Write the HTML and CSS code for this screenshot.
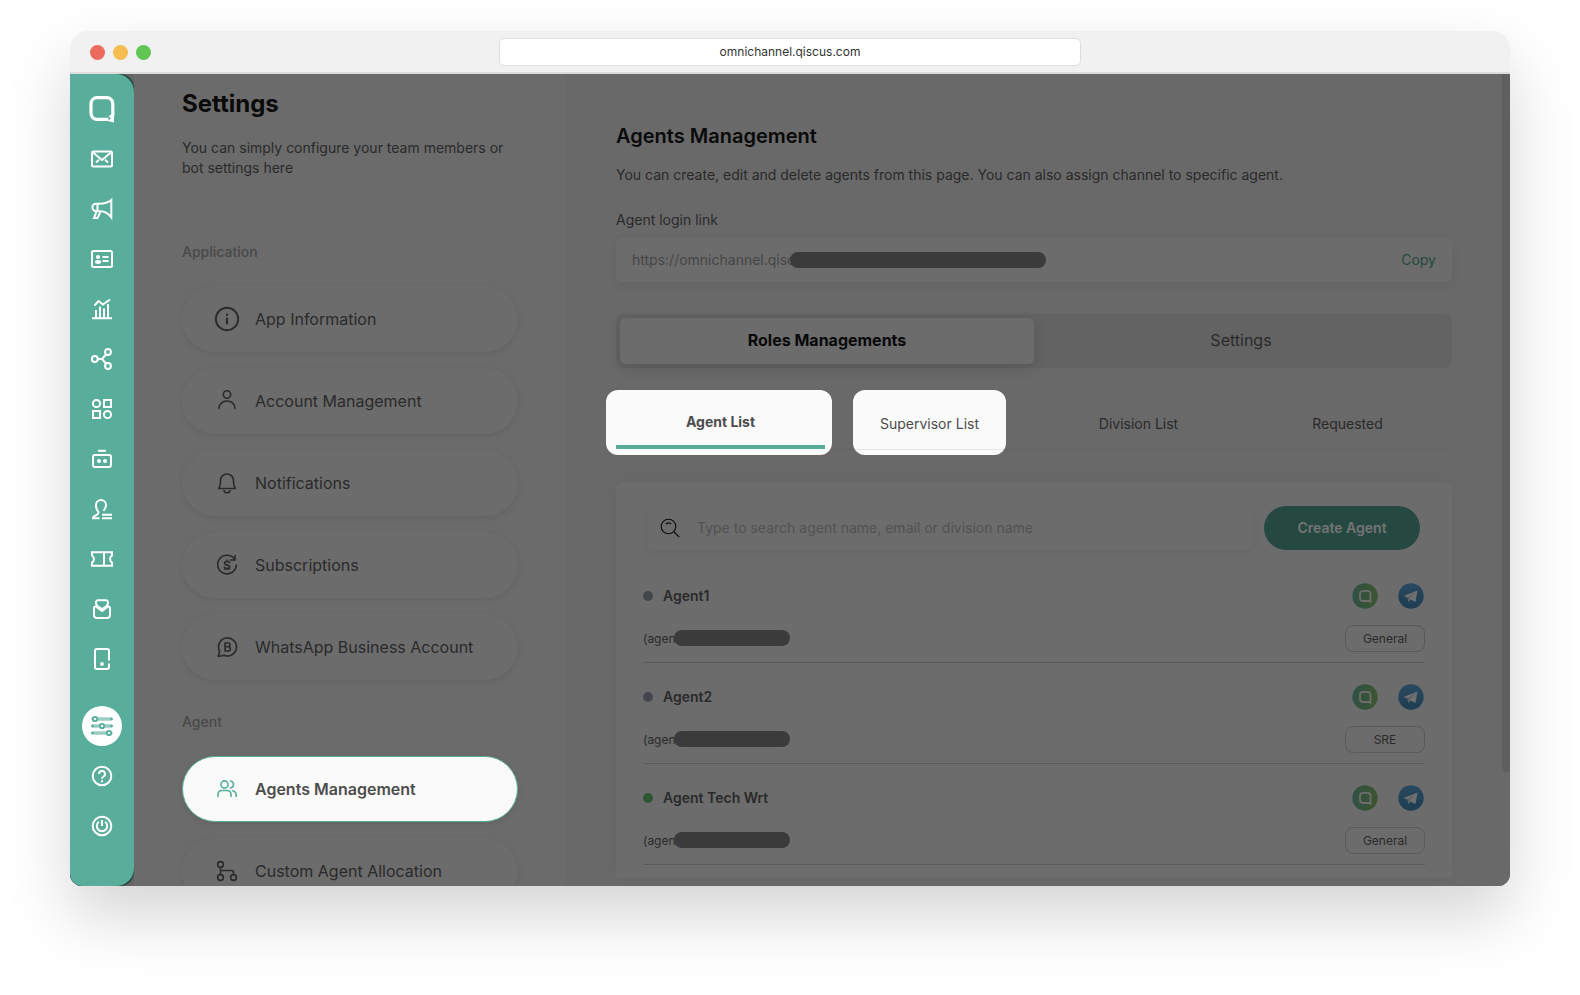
FILE: index.html
```html
<!DOCTYPE html>
<html lang="en">
<head>
<meta charset="utf-8">
<title>Agents Management</title>
<link rel="stylesheet" href="styles.css">
</head>
<body>
<svg class="defs" aria-hidden="true">
  <defs>
    <linearGradient id="g-qiscus" x1="0" y1="0" x2="1" y2="0"><stop offset="0" stop-color="#2f5145"/><stop offset="1" stop-color="#3c552f"/></linearGradient>
    <linearGradient id="g-telegram" x1="0" y1="0" x2="0" y2="1"><stop offset="0" stop-color="#28495f"/><stop offset="1" stop-color="#1e3d52"/></linearGradient>
    <symbol id="i-qiscus" viewBox="0 0 26 26"><circle cx="13" cy="13" r="12.700" fill="url(#g-qiscus)"/><path d="M18.500 18.800l-1.500-.8H11a3 3 0 0 1-3-3V10.800a3 3 0 0 1 3-3h4.500a3 3 0 0 1 3 3v8z" fill="none" stroke="#6d6d6d" stroke-width="1.800"/></symbol>
    <symbol id="i-telegram" viewBox="0 0 26 26"><circle cx="13" cy="13" r="12.700" fill="url(#g-telegram)"/><path d="M5.500 13 19.500 7.500 17.500 19 12.500 16.500 10.500 19 9.500 14.500z" fill="#707070"/><path d="M9.500 14.500 17 9.500 11.500 15.500 10.500 19z" fill="#585f64"/></symbol>
  </defs>
</svg>

<div class="browser">
  <header class="titlebar">
    <div class="lights"><span class="light light-red"></span><span class="light light-yellow"></span><span class="light light-green"></span></div>
    <input class="address" type="text" value="omnichannel.qiscus.com" aria-label="Address" readonly>
  </header>

  <div class="app">
    <div class="rail-wrap">
    <nav class="rail" aria-label="Main">
      <a class="rail-item" href="#" aria-label="Home"><svg width="28" height="28" viewBox="0 0 28 28"><path d="M20.500 24.300H9a6 6 0 0 1-6-6V8.700a6 6 0 0 1 6-6h9.800a6 6 0 0 1 6 6V20" fill="none" stroke="#fff" stroke-width="3.200"/><path d="M20.500 21l5.900-3-.6 9.600-6-1.700 3.200-2.400z" fill="#fff"/></svg></a>
      <a class="rail-item" href="#" aria-label="Inbox"><svg class="ico" viewBox="0 0 24 24"><rect x="2" y="4.500" width="20" height="15" rx="1.500"/><path d="M3 5.500l9 7.500 9-7.500M6 15.500l3-2.700M18 15.500l-3-2.700"/></svg></a>
      <a class="rail-item" href="#" aria-label="Broadcast"><svg class="ico" viewBox="0 0 24 24"><path d="M21.300 3v17.500C18 16 15 14 8 14H6a3.600 3.600 0 0 1 0-7.300h3C15 6.700 18 6 21.300 3zM7.500 7v7M6.500 14.500L4 21h3.500L10.500 14.500"/></svg></a>
      <a class="rail-item" href="#" aria-label="Contacts"><svg class="ico" viewBox="0 0 24 24"><rect x="2" y="4" width="20" height="16" rx="1.500"/><circle cx="8" cy="10" r="2.100" class="fill"/><ellipse cx="8" cy="15" rx="3" ry="1.900" class="fill"/><path d="M12.500 10h6M12.500 14h6"/></svg></a>
      <a class="rail-item" href="#" aria-label="Analytics"><svg class="ico" viewBox="0 0 24 24"><path d="M2 21.300h20M6 21v-8M10 21V9.500M14 21v-9.500M18 21V7M4.500 8.500L8.500 4l4.500 3.500 7-5"/></svg></a>
      <a class="rail-item" href="#" aria-label="Integration"><svg class="ico" viewBox="0 0 24 24"><circle cx="4.800" cy="12" r="2.900"/><circle cx="18" cy="5" r="2.900"/><circle cx="18" cy="19" r="2.900"/><path d="M8 12h4M16 7.500L12 12l4 4.500"/></svg></a>
      <a class="rail-item" href="#" aria-label="App center"><svg class="ico" viewBox="0 0 24 24"><circle cx="6.500" cy="6.500" r="3.600"/><rect x="14" y="3" width="7" height="7"/><rect x="3" y="14" width="7" height="7"/><circle cx="17.500" cy="17.500" r="3.600"/></svg></a>
      <a class="rail-item" href="#" aria-label="Bot"><svg class="ico" viewBox="0 0 24 24"><path d="M8 3.800h8"/><rect x="3" y="8" width="18" height="12" rx="2"/><circle cx="9" cy="14" r="2" class="fill"/><circle cx="15" cy="14" r="2" class="fill"/></svg></a>
      <a class="rail-item" href="#" aria-label="Customers"><svg class="ico" viewBox="0 0 24 24"><path d="M2 21.300h7.500M3 20c2.500-2 5.500-2 5.500-4.500C8.500 14 6 13 6 9V8a5 5 0 0 1 10 0c0 3-2 4-2 6M12 21.300h10M12 17.700h10"/></svg></a>
      <a class="rail-item" href="#" aria-label="Tickets"><svg class="ico" viewBox="0 0 24 24"><path d="M2 5.200h20v3.300c-2.600 1.500-2.600 5.500 0 7v3.300H2v-3.300c2.600-1.500 2.600-5.500 0-7zM14 5v14"/></svg></a>
      <a class="rail-item" href="#" aria-label="Messages"><svg class="ico" viewBox="0 0 24 24"><path d="M8 9.500L6.200 7.200c-.6-1.200-.4-4 1.800-4h8c2.200 0 2.400 2.800 1.800 4L16 9.500 12 12zM4 11.500V18a3 3 0 0 0 3 3h10a3 3 0 0 0 3-3v-6.500c0-2-1.500-2.300-2.500-1.500L12 14 6.500 10C5.500 9.200 4 9.500 4 11.500z"/></svg></a>
      <a class="rail-item" href="#" aria-label="Mobile"><svg class="ico" viewBox="0 0 24 24"><path d="M19 13.500V4a2 2 0 0 0-2-2H7a2 2 0 0 0-2 2v16a2 2 0 0 0 2 2h10a2 2 0 0 0 2-2v-3.500"/><circle cx="12" cy="17" r="1.900" class="fill"/></svg></a>
      <a class="rail-item rail-current" href="#" aria-label="Settings"><span class="disc"><svg width="24" height="24" viewBox="0 0 24 24"><path d="M3 5h18M3 12h18M3 19h18" stroke="#9acdc1" stroke-width="3.600" stroke-linecap="round"/><g fill="#e4f3f0" stroke="#58ae9b" stroke-width="1.800"><circle cx="5" cy="5" r="2.200"/><circle cx="12" cy="12" r="2.200"/><circle cx="19" cy="19" r="2.200"/></g><g fill="#58ae9b"><circle cx="21.500" cy="5" r="1.300"/><circle cx="2.500" cy="12" r="1.300"/><circle cx="21.500" cy="12" r="1.300"/><circle cx="2.500" cy="19" r="1.300"/></g></svg></span></a>
      <a class="rail-item" href="#" aria-label="Help"><svg class="ico" viewBox="0 0 24 24"><circle cx="12" cy="12" r="9.300"/><path d="M9 10a3 3 0 1 1 4.500 2.500c-1 .6-1.500 1-1.500 2.300M12 16.300v2"/></svg></a>
      <a class="rail-item" href="#" aria-label="Log out"><svg class="ico" viewBox="0 0 24 24"><circle cx="12" cy="12" r="9.300"/><path d="M9 7.800a5.200 5.200 0 1 0 6 0M12 6v6"/></svg></a>
    </nav>
    </div>

    <aside class="menu">
      <h1 class="menu-title">Settings</h1>
      <p class="menu-text">You can simply configure your team members or bot settings here</p>
      <h2 class="menu-label">Application</h2>
      <nav class="menu-group" aria-label="Application">
        <a class="menu-card" href="#"><svg class="mi" viewBox="0 0 26 26"><circle cx="13" cy="13" r="11.200" stroke-width="1.900"/><path d="M13 12.500v5M13 8.500v.5" stroke-width="2.100"/></svg>App Information</a>
        <a class="menu-card" href="#"><svg class="mi" viewBox="0 0 26 26"><circle cx="13" cy="6.500" r="3.700"/><path d="M5 20.500c0-10 16-10 16 0"/></svg>Account Management</a>
        <a class="menu-card" href="#"><svg class="mi" viewBox="0 0 26 26"><path d="M4.500 18.500h17c-2-2-2-4-2-8a6.500 6.500 0 0 0-13 0c0 4 0 6-2 8zM10 20.500c.5 3 5.500 3 6 0"/></svg>Notifications</a>
        <a class="menu-card" href="#"><svg class="mi" viewBox="0 0 26 26"><path d="M20.500 7A9.300 9.300 0 1 0 22.300 13M21 3.500V8h-4.500M15.500 10.500c-1-1.500-5-1.300-5 .8 0 2.400 5.200 1.200 5.200 3.500 0 2.100-4.400 2.200-5.400.3M13 8v1.500M10.500 17h5"/></svg>Subscriptions</a>
        <a class="menu-card" href="#"><svg class="mi" viewBox="0 0 26 26"><path d="M5.500 17A9 9 0 1 1 10 21.200c-2 .9-4 1-6 1 1-1.700 1.700-3.200 1.500-5.200zM11 9v8h3.200a2.100 2.100 0 0 0 0-4.200H11h3a1.900 1.900 0 0 0 0-3.800z"/></svg>WhatsApp Business Account</a>
      </nav>
      <h2 class="menu-label menu-label-next">Agent</h2>
      <nav class="menu-group" aria-label="Agent">
        <a class="menu-card menu-card-active" href="#"><svg class="mi" viewBox="0 0 26 26"><circle cx="10.500" cy="8.500" r="3.600"/><path d="M4 20.500v-2c0-2.600 1.500-4 4-4h5c2.500 0 4 1.400 4 4v2M16.500 5c4 .8 4 6.300 0 7M18.700 14.700c2.500.6 3.500 2 3.500 4v1.800"/></svg>Agents Management</a>
        <a class="menu-card" href="#"><svg class="mi" viewBox="0 0 26 26"><circle cx="6.500" cy="6.500" r="2.900"/><circle cx="6.500" cy="19.500" r="2.900"/><circle cx="19.500" cy="19.500" r="2.900"/><path d="M6.500 9.500v7M6.500 12.500h11c1.300 0 2 .7 2 2v2"/></svg>Custom Agent Allocation</a>
      </nav>
    </aside>

    <main class="content">
      <div class="page">
        <h2 class="page-title">Agents Management</h2>
        <p class="page-text">You can create, edit and delete agents from this page. You can also assign channel to specific agent.</p>
        <label class="field-label" for="login-link">Agent login link</label>
        <div class="link-field">
          <input id="login-link" class="link-input" type="text" value="https://omnichannel.qisc" readonly>
          <span class="redact redact-link"></span>
          <button class="copy" type="button">Copy</button>
        </div>

        <div class="switch">
          <button class="switch-item switch-on" type="button">Roles Managements</button>
          <button class="switch-item" type="button">Settings</button>
        </div>

        <div class="tabs">
          <button class="tab tab-on" type="button">Agent List</button>
          <button class="tab tab-lit" type="button">Supervisor List</button>
          <button class="tab" type="button">Division List</button>
          <button class="tab" type="button">Requested</button>
        </div>

        <section class="panel">
          <div class="tools">
            <div class="search">
              <svg class="search-icon" viewBox="0 0 20 20"><circle cx="8.500" cy="8.500" r="7.300"/><path d="M14 14l5.300 5M5.800 6.200c1.500-1.400 3.900-1.400 5.400 0"/></svg>
              <input class="search-input" type="text" placeholder="Type to search agent name, email or division name" aria-label="Search agents">
            </div>
            <button class="create" type="button">Create Agent</button>
          </div>
          <ul class="agents">
            <li class="agent">
              <div class="agent-main"><span class="dot"></span><strong class="agent-name">Agent1</strong></div>
              <div class="channels"><svg class="channel"><use href="#i-qiscus"/></svg><svg class="channel"><use href="#i-telegram"/></svg></div>
              <div class="agent-mail">(agen<span class="redact redact-mail"></span></div>
              <span class="division">General</span>
            </li>
            <li class="agent">
              <div class="agent-main"><span class="dot"></span><strong class="agent-name">Agent2</strong></div>
              <div class="channels"><svg class="channel"><use href="#i-qiscus"/></svg><svg class="channel"><use href="#i-telegram"/></svg></div>
              <div class="agent-mail">(agen<span class="redact redact-mail"></span></div>
              <span class="division">SRE</span>
            </li>
            <li class="agent">
              <div class="agent-main"><span class="dot dot-online"></span><strong class="agent-name">Agent Tech Wrt</strong></div>
              <div class="channels"><svg class="channel"><use href="#i-qiscus"/></svg><svg class="channel"><use href="#i-telegram"/></svg></div>
              <div class="agent-mail">(agen<span class="redact redact-mail"></span></div>
              <span class="division">General</span>
            </li>
          </ul>
        </section>
      </div>
      <div class="scroll"><div class="thumb"></div></div>
    </main>
  </div>
</div>
</body>
</html>
```
FILE: styles.css
```css
* { box-sizing: border-box; }
body {
  margin: 0;
  height: 100vh;
  padding: 31px 70px 109px;
  display: flex;
  background: #fff;
  color: #2a2a2a;
  font: 14px/20px Inter, "Liberation Sans", sans-serif;
  overflow: hidden;
}
h1, h2, p, ul { margin: 0; padding: 0; }
button, input { font: inherit; color: inherit; border: 0; background: none; padding: 0; }
a { color: inherit; text-decoration: none; }
.defs { position: absolute; width: 0; height: 0; }

.browser {
  flex: 1;
  min-width: 0;
  display: flex;
  flex-direction: column;
  border-radius: 18px 18px 12px 12px;
  box-shadow: 0 30px 64px rgba(0, 0, 0, .17);
}
.titlebar {
  height: 43px;
  flex: none;
  display: grid;
  grid-template-columns: 1fr 582px 1fr;
  align-items: center;
  padding: 0 20px;
  background: #f1f1f1;
  border-bottom: 2px solid #dcdcdc;
  border-radius: 18px 18px 0 0;
}
.lights { display: flex; gap: 8px; padding-top: 2px; }
.light { width: 15px; height: 15px; border-radius: 50%; }
.light-red { background: #ed6a5e; }
.light-yellow { background: #f5bd4f; }
.light-green { background: #61c554; }
.address {
  height: 28px;
  background: #fff;
  border: 1px solid #dedede;
  border-radius: 5px;
  color: #333;
  font-size: 12px;
  text-align: center;
}

.app {
  flex: 1;
  min-height: 0;
  display: flex;
  overflow: hidden;
  background: #6b6b6b;
  border-radius: 0 0 12px 12px;
}

.rail-wrap {
  width: 64px;
  flex: none;
  background: #254941;
  border-radius: 0 14px 14px 0;
  box-shadow: 0 0 8px rgba(0, 0, 0, .2);
}
.rail {
  height: 100%;
  padding-top: 10px;
  display: flex;
  flex-direction: column;
  background: #58ae9b;
  border-radius: 0 18px 18px 12px;
}
.rail-item {
  height: 50px;
  flex: none;
  display: flex;
  align-items: center;
  justify-content: center;
}
.rail-current { margin-top: 17px; }
.ico { width: 24px; height: 24px; fill: none; stroke: #fff; stroke-width: 2; }
.ico .fill { fill: #fff; stroke: none; }
.disc {
  width: 40px;
  height: 40px;
  border-radius: 50%;
  background: #fff;
  display: flex;
  align-items: center;
  justify-content: center;
}

.menu {
  width: 432px;
  flex: none;
  padding: 14px 48px 0;
  overflow: hidden;
  background: #6b6b6b;
}
.menu-title { font-size: 24px; line-height: 32px; font-weight: 700; color: #0a0a0a; }
.menu-text { margin-top: 18px; }
.menu-label {
  margin: 64px 0 24px;
  font-size: 14px;
  line-height: 20px;
  font-weight: 500;
  color: #494949;
}
.menu-label-next { margin-top: 32px; }
.menu-group { display: flex; flex-direction: column; gap: 16px; }
.menu-card {
  height: 66px;
  display: flex;
  align-items: center;
  gap: 15px;
  padding-left: 32px;
  border-radius: 33px;
  background: #6c6c6c;
  box-shadow: 0 2px 6px rgba(0, 0, 0, .08);
  font-size: 16px;
}
.menu-card-active {
  padding-left: 31px;
  background: #fafafa;
  border: 1px solid #58ae9b;
  color: #4c4c4c;
  font-weight: 600;
}
.mi { width: 26px; height: 26px; fill: none; stroke: currentColor; stroke-width: 1.6; stroke-linecap: round; stroke-linejoin: round; }
.menu-card-active .mi { stroke: #58ae9b; }

.content { flex: 1; min-width: 0; display: flex; background: #696969; }
.page {
  flex: 1;
  min-width: 0;
  padding: 48px 50px 8px;
  display: flex;
  flex-direction: column;
}
.page-title { font-size: 20px; line-height: 28px; font-weight: 600; color: #0a0a0a; }
.page-text { margin-top: 15px; }
.field-label { margin-top: 25px; }
.link-field {
  position: relative;
  margin-top: 8px;
  height: 44px;
  flex: none;
  display: flex;
  align-items: center;
  padding: 0 16px;
  background: #6c6c6c;
  border-radius: 6px;
  box-shadow: 0 4px 12px rgba(0, 0, 0, .05);
}
.link-input { flex: 1; min-width: 0; color: #464646; }
.redact { position: absolute; height: 16px; border-radius: 8px; background: #3b3b3b; }
.redact-link { left: 174px; width: 256px; }
.copy { color: #254941; }

.switch {
  margin-top: 32px;
  height: 54px;
  flex: none;
  display: flex;
  padding: 4px;
  background: #636363;
  border-radius: 8px;
}
.switch-item { flex: 1; padding-bottom: 2px; font-size: 16px; border-radius: 6px; }
.switch-on {
  background: #6c6c6c;
  color: #080808;
  font-weight: 700;
  box-shadow: 0 4px 16px rgba(0, 0, 0, .13);
}

.tabs {
  margin-top: 32px;
  height: 50px;
  flex: none;
  display: grid;
  grid-template-columns: repeat(4, 1fr);
  border-bottom: 1px solid #646464;
}
.tab { position: relative; z-index: 0; padding-bottom: 2px; }
.tab-on { padding-bottom: 6px; font-weight: 700; color: #4c4c4c; }
.tab-lit { color: #4c4c4c; }
.tab-on::before, .tab-lit::before {
  content: "";
  position: absolute;
  z-index: -1;
  background: #fafafa;
  border-radius: 12px;
}
.tab-on::before { inset: -10px -7px -6px -10px; }
.tab-on::after {
  content: "";
  position: absolute;
  inset: auto 0 0;
  height: 4px;
  background: #58ae9b;
}
.tab-lit::before { inset: -10px 28px -6px 28px; background: linear-gradient(#e6e6e6, #e6e6e6) 0 59px / 100% 1px no-repeat #fafafa; }

.panel {
  flex: 1;
  min-height: 0;
  margin-top: 32px;
  padding: 24px 27px 0;
  background: #6c6c6c;
  border-radius: 8px 8px 0 0;
  box-shadow: 0 0 16px rgba(0, 0, 0, .04);
}
.tools { display: flex; gap: 12px; padding: 0 5px; }
.search {
  flex: 1;
  display: flex;
  align-items: center;
  gap: 17px;
  padding-left: 12px;
  border-radius: 6px;
  box-shadow: 0 4px 12px rgba(0, 0, 0, .05);
}
.search-icon { width: 20px; height: 20px; flex: none; fill: none; stroke: #0c0c0c; stroke-width: 1.1; }
.search-input { flex: 1; min-width: 0; height: 44px; padding-bottom: 1px; }
.search-input::placeholder { color: #525252; opacity: 1; }
.create {
  width: 156px;
  height: 44px;
  border-radius: 22px;
  background: #254941;
  color: #747474;
  font-weight: 600;
}
.agents { margin-top: 12px; list-style: none; }
.agent {
  height: 101px;
  display: grid;
  grid-template-columns: 1fr auto;
  grid-template-rows: 26px 27px;
  row-gap: 16px;
  padding-top: 21px;
  border-bottom: 1px solid #5a5a5a;
}
.agent-main { display: flex; align-items: center; gap: 10px; }
.dot { width: 10px; height: 10px; border-radius: 50%; background: #43474d; }
.dot-online { background: #2f5633; }
.agent-name { font-weight: 600; }
.channels { display: flex; gap: 20px; padding-right: 1px; justify-content: flex-end; }
.channel { width: 26px; height: 26px; }
.agent-mail { position: relative; display: flex; align-items: center; font-size: 12px; }
.redact-mail { top: 5px; left: 31px; width: 116px; }
.division {
  width: 80px;
  display: flex;
  align-items: center;
  justify-content: center;
  border: 1px solid #5a5a5a;
  border-radius: 8px;
  font-size: 12px;
}
.scroll { width: 8px; flex: none; }
.thumb { height: 86%; background: #5f5f5f; border-radius: 0 0 4px 4px; }
```
